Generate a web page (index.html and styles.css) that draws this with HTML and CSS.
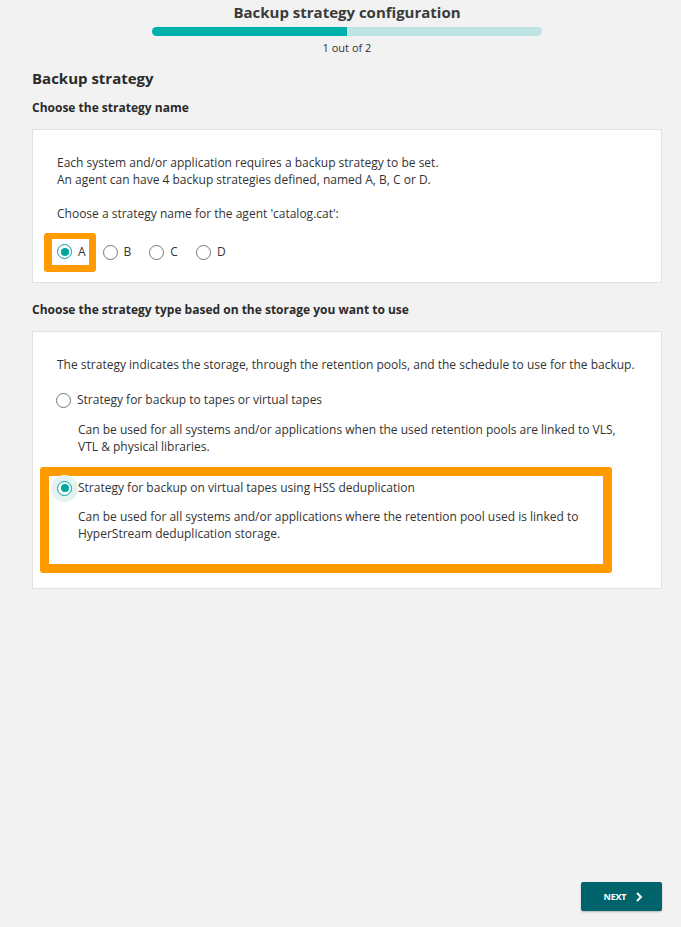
FILE: index.html
```html
<!DOCTYPE html>
<html lang="en">
<head>
<meta charset="utf-8">
<title>Backup strategy configuration</title>
<link rel="stylesheet" href="styles.css">
</head>
<body>
<div class="page">
  <header class="wizard-head">
    <h1 class="wizard-title">Backup strategy configuration</h1>
    <div class="progress"><div class="progress-fill" style="width:50%"></div></div>
    <div class="progress-label">1 out of 2</div>
  </header>

  <main class="content">
    <h2 class="page-title">Backup strategy</h2>

    <h3 class="section-title">Choose the strategy name</h3>
    <section class="card card-name">
      <p class="para">Each system and/or application requires a backup strategy to be set.<br>An agent can have 4 backup strategies defined, named A, B, C or D.</p>
      <p class="para para-choose">Choose a strategy name for the agent 'catalog.cat':</p>
      <div class="radio-row">
        <div class="hl hl-small">
          <label class="radio"><span class="dot checked"></span><span class="rlabel">A</span></label>
        </div>
        <label class="radio"><span class="dot"></span><span class="rlabel">B</span></label>
        <label class="radio"><span class="dot"></span><span class="rlabel">C</span></label>
        <label class="radio"><span class="dot"></span><span class="rlabel">D</span></label>
      </div>
    </section>

    <h3 class="section-title section-title-2">Choose the strategy type based on the storage you want to use</h3>
    <section class="card card-type">
      <p class="para">The strategy indicates the storage, through the retention pools, and the schedule to use for the backup.</p>
      <div class="option option-1">
        <label class="radio"><span class="dot"></span><span class="rlabel">Strategy for backup to tapes or virtual tapes</span></label>
        <p class="desc">Can be used for all systems and/or applications when the used retention pools are linked to VLS, VTL &amp; physical libraries.</p>
      </div>
      <div class="hl hl-big">
        <div class="option option-2">
          <label class="radio"><span class="dot checked focus"></span><span class="rlabel">Strategy for backup on virtual tapes using HSS deduplication</span></label>
          <p class="desc">Can be used for all systems and/or applications where the retention pool used is linked to HyperStream deduplication storage.</p>
        </div>
      </div>
    </section>
  </main>

  <footer class="footer">
    <button class="btn-next">NEXT
      <svg class="chev" width="8" height="10" viewBox="0 0 8 10"><path d="M2 1 L6 5 L2 9" fill="none" stroke="#fff" stroke-width="2"/></svg>
    </button>
  </footer>
</div>
</body>
</html>
```

FILE: styles.css
```css
* { box-sizing: border-box; }
html, body { margin: 0; padding: 0; }
body {
  background: #f2f2f2;
  font-family: "Open Sans", "Noto Sans", sans-serif;
  color: #333;
  font-size: 12px;
}
.page {
  min-height: 927px;
  display: flex;
  flex-direction: column;
  padding: 0 19px 0 32px;
}
.wizard-head {
  display: flex;
  flex-direction: column;
  align-items: center;
  padding-top: 2px;
}
.wizard-title {
  margin: 0;
  font-size: 15px;
  line-height: 20px;
  font-weight: 700;
  color: #3a3a3a;
}
.progress {
  margin-top: 5px;
  width: 390px;
  height: 9px;
  border-radius: 5px;
  background: #bde3e3;
  overflow: hidden;
}
.progress-fill {
  height: 100%;
  background: #00b0aa;
}
.progress-label {
  margin-top: 4px;
  font-size: 11px;
  line-height: 16px;
  color: #333;
}
.content { display: flex; flex-direction: column; }
.page-title {
  margin: 12px 0 0;
  font-size: 15px;
  line-height: 20px;
  font-weight: 700;
  color: #2b2b2b;
}
.section-title {
  margin: 11px 0 0;
  font-size: 12px;
  line-height: 18px;
  font-weight: 700;
  color: #2b2b2b;
}
.section-title-2 { margin-top: 18px; }
.card {
  margin-top: 12px;
  background: #fff;
  border: 1px solid #e2e2e2;
  padding: 24px 24px 18px;
}
.card-type { padding-bottom: 15px; }
.para {
  margin: 0;
  line-height: 17px;
}
.para-choose { margin-top: 17px; }
.radio-row {
  margin-top: 18px;
  display: flex;
  align-items: center;
  height: 24px;
}
.radio {
  display: flex;
  align-items: center;
  height: 20px;
  line-height: 20px;
  margin-right: 18px;
}
.dot {
  width: 15px;
  height: 15px;
  border-radius: 50%;
  border: 1.5px solid #777;
  background: #fff;
  display: inline-flex;
  align-items: center;
  justify-content: center;
  flex: none;
}
.dot.checked { border-color: #00a59e; }
.dot.checked::after {
  content: "";
  width: 8px;
  height: 8px;
  border-radius: 50%;
  background: #00a59e;
}
.dot.focus { box-shadow: 0 0 0 6px #e2f3f2; }
.rlabel { margin-left: 6px; color: #333; }
.hl {
  border-style: solid;
  border-color: #ff9b00;
  background: #fff;
}
.hl-small {
  border-width: 6px 7px 7px 8px;
  border-radius: 3px;
  margin: 0 7px 0 -13px;
  padding: 0 2px 0 5px;
  height: 39px;
  display: flex;
  align-items: center;
}
.hl-small .radio { margin-right: 1px; }
.option-1 { margin-top: 17px; }
.option-1 .radio { margin-left: -1px; }
.desc {
  margin: 11px 0 0;
  padding-left: 21px;
  line-height: 17px;
}
.hl-big {
  margin: 12px 25px 0 -17px;
  border-width: 9px;
  border-radius: 3px;
  padding: 2px 0 22px 8px;
}
.option-2 .desc { margin-top: 10px; }
.footer {
  margin-top: auto;
  display: flex;
  justify-content: flex-end;
  padding-bottom: 16px;
}
.btn-next {
  width: 81px;
  height: 29px;
  background: #00626a;
  border: none;
  border-radius: 2px;
  color: #fff;
  font-family: "Open Sans", sans-serif;
  font-weight: 700;
  font-size: 9px;
  letter-spacing: -0.2px;
  display: flex;
  align-items: center;
  justify-content: center;
  gap: 9px;
  padding: 0 0 0 4px;
  box-shadow: 0 1px 2px rgba(0,0,0,0.25);
}
.chev { display: block; }
```
